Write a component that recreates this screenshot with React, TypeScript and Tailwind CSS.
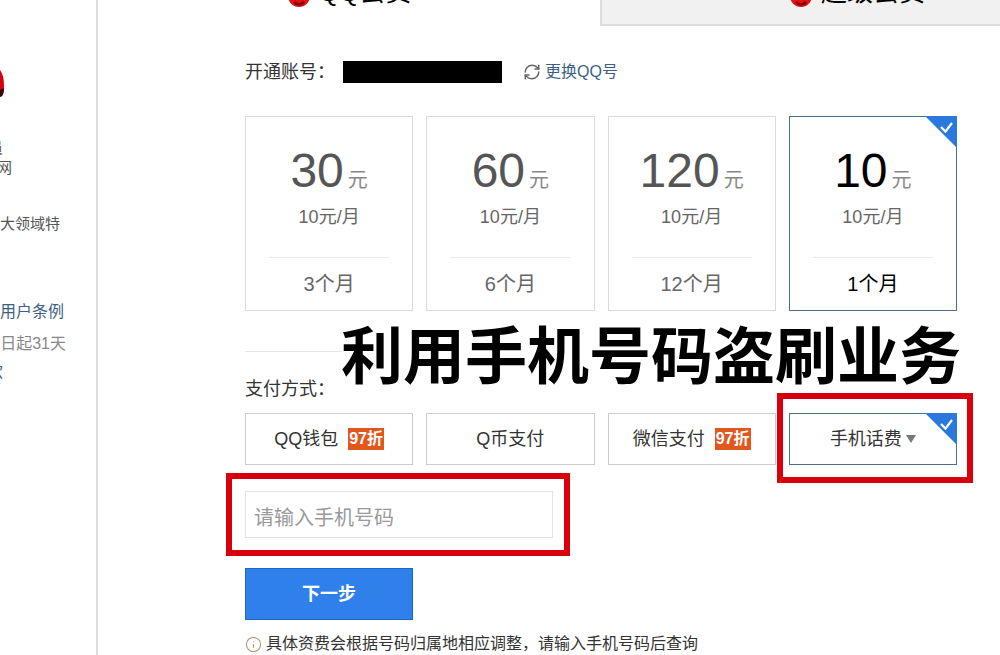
import React, { useState } from 'react';
import { RefreshCw, Info } from 'lucide-react';

interface Plan {
    price: string;
    unit: string;
    period: string;
}

interface PayMethod {
    id: string;
    label: string;
    discount?: string;
    dropdown?: boolean;
}

const PLANS: Plan[] = [
    { price: '30', unit: '10元/月', period: '3个月' },
    { price: '60', unit: '10元/月', period: '6个月' },
    { price: '120', unit: '10元/月', period: '12个月' },
    { price: '10', unit: '10元/月', period: '1个月' },
];

const METHODS: PayMethod[] = [
    { id: 'wallet', label: 'QQ钱包', discount: '97折' },
    { id: 'qcoin', label: 'Q币支付' },
    { id: 'wechat', label: '微信支付', discount: '97折' },
    { id: 'phone', label: '手机话费', dropdown: true },
];

// Blue corner with a tick, shown on the selected box
const CornerTick: React.FC = () => (
    <svg className="absolute -top-px -right-px w-8 h-8" viewBox="0 0 32 32" aria-hidden="true">
        <path d="M0 0H32V32Z" fill="#2b79dd" />
        <path d="M16 11L20.5 15.5L27 7" fill="none" stroke="#fff" strokeWidth="2.2" />
    </svg>
);

const TabDot: React.FC = () => (
    <svg className="w-6 h-6" viewBox="0 0 24 24" aria-hidden="true">
        <circle cx="12" cy="12" r="11" fill="#e01212" />
        <path d="M7 18Q12 23 17 18" fill="none" stroke="#8a0000" strokeWidth="2.5" />
    </svg>
);

const Sidebar: React.FC = () => (
    <aside className="w-[98px] shrink-0 overflow-hidden border-r-2 border-[#dcdcdc] whitespace-nowrap text-[15px] leading-5 text-[#555]">
        <svg className="mt-[70px] w-1 h-7" viewBox="0 0 4 28" aria-hidden="true">
            <path d="M0 0Q4 5 4 16Q4 22 2 26L0 27Z" fill="#d80010" />
            <path d="M0 20L4 18Q4 24 2 26L0 27Z" fill="#3a0508" />
        </svg>
        <div className="mt-10 flex w-[3px] justify-end">员</div>
        <div className="flex w-3 justify-end">网</div>
        <div className="mt-9 flex w-[60px] justify-end">大领域特</div>
        <div className="mt-[62px] text-base leading-8">
            <a href="#terms" className="flex w-16 justify-end text-[#3d5f85]">用户条例</a>
            <div className="flex w-[66px] justify-end text-[#888]">日起31天</div>
            <a href="#rules" className="flex w-[3px] justify-end leading-6 text-[#3d5f85]">款</a>
        </div>
    </aside>
);

const App: React.FC = () => {
    const [plan, setPlan] = useState(3);
    const [method, setMethod] = useState('phone');
    const [phone, setPhone] = useState('');

    return (
        <div className="flex h-screen overflow-hidden bg-white font-['Liberation_Sans','Noto_Sans_CJK_SC',sans-serif] text-[#333]">
            <Sidebar />

            <main className="min-w-0 flex-1">
                {/* Tabs, partly scrolled out of view */}
                <nav className="-mt-10 flex h-[66px] text-[26px] leading-8 text-black">
                    <button className="flex flex-[502] items-start justify-center gap-2 pt-4">
                        <span className="pt-2"><TabDot /></span>
                        QQ会员
                    </button>
                    <button className="flex flex-[510] -mr-28 items-start justify-center gap-2 border-b-2 border-l-2 border-[#ddd] bg-[#f1f1f1] pt-4">
                        <span className="pt-2"><TabDot /></span>
                        超级会员
                    </button>
                </nav>

                <div className="pt-[34px] pl-[147px] pr-[43px]">
                    {/* Account */}
                    <div className="flex h-6 items-center text-lg leading-6">
                        <span className="w-[98px] whitespace-nowrap">开通账号：</span>
                        <span className="h-[22px] w-[159px] bg-black" />
                        <a href="#switch" className="ml-[21px] flex items-center gap-1 text-base text-[#3d5f85]">
                            <RefreshCw className="h-[18px] w-[18px] text-[#666]" strokeWidth={2} />
                            更换QQ号
                        </a>
                    </div>

                    {/* Plans */}
                    <div className="mt-8 grid grid-cols-4 gap-[13px]">
                        {PLANS.map((p, i) => {
                            const active = plan === i;
                            return (
                                <button
                                    key={p.period}
                                    onClick={() => setPlan(i)}
                                    aria-pressed={active}
                                    className={`relative flex h-[195px] flex-col items-center border pt-7 ${active ? 'border-[#4d6f8c]' : 'border-[#d9d9d9]'}`}
                                >
                                    <span className="flex items-baseline gap-1">
                                        <span className={`text-5xl leading-[52px] ${active ? 'text-black' : 'text-[#555]'}`}>{p.price}</span>
                                        <span className="text-xl leading-6 text-[#888]">元</span>
                                    </span>
                                    <span className="mt-[6px] text-lg leading-7 text-[#666]">{p.unit}</span>
                                    <span className="mt-[26px] w-30 border-t border-[#e8e8e8]" />
                                    <span className={`mt-3 text-xl leading-7 ${active ? 'text-black' : 'text-[#666]'}`}>{p.period}</span>
                                    {active && <CornerTick />}
                                </button>
                            );
                        })}
                    </div>

                    {/* Payment */}
                    <div className="relative mt-10 w-24 border-t border-[#e4e4e4] pt-[25px]">
                        <h2 className="text-lg leading-6 whitespace-nowrap">支付方式：</h2>
                        <p className="absolute -top-[30px] left-[96px] text-[62px] leading-[72px] font-bold whitespace-nowrap text-black">
                            利用手机号码盗刷业务
                        </p>
                    </div>
                    <div className="mt-3 grid grid-cols-4 gap-[13px]">
                        {METHODS.map(m => {
                            const active = method === m.id;
                            return (
                                <div key={m.id} className="relative">
                                    <button
                                        onClick={() => setMethod(m.id)}
                                        aria-pressed={active}
                                        className={`relative flex h-[52px] w-full items-center justify-center border text-lg leading-6 ${active ? 'border-[#4d6f8c]' : 'border-[#ccc]'}`}
                                    >
                                        {m.label}
                                        {m.discount && (
                                            <span className="ml-[10px] bg-[#e2571e] px-px text-base leading-[22px] font-bold text-white">{m.discount}</span>
                                        )}
                                        {m.dropdown && (
                                            <svg className="ml-1 h-2 w-[10px]" viewBox="0 0 10 8" aria-hidden="true">
                                                <path d="M0 0H10L5 8Z" fill="#777" />
                                            </svg>
                                        )}
                                        {active && <CornerTick />}
                                    </button>
                                    {m.dropdown && (
                                        <span className="pointer-events-none absolute -top-5 -right-4 -bottom-[18px] -left-3 border-[6px] border-[#d8000c]" />
                                    )}
                                </div>
                            );
                        })}
                    </div>

                    {/* Phone number */}
                    <div className="mt-2 -ml-[19px] w-[344px] border-[6px] border-[#d8000c] px-[13px] py-3">
                        <input
                            type="tel"
                            aria-label="手机号码"
                            placeholder="请输入手机号码"
                            value={phone}
                            onChange={e => setPhone(e.target.value)}
                            className="block h-[47px] w-[308px] border border-[#e2e2e2] px-2 pt-2 text-xl outline-none placeholder:text-[#999]"
                        />
                    </div>
                    <button className="mt-3 block h-[52px] w-[168px] border border-[#1f66c4] bg-[#2f80ea] text-lg font-bold text-white">
                        下一步
                    </button>
                    <p className="mt-3 flex items-center gap-1 text-base leading-6 whitespace-nowrap">
                        <Info className="h-[17px] w-[17px] text-[#a8946a]" strokeWidth={1.5} />
                        具体资费会根据号码归属地相应调整，请输入手机号码后查询
                    </p>
                </div>
            </main>
        </div>
    );
};

export default App;
